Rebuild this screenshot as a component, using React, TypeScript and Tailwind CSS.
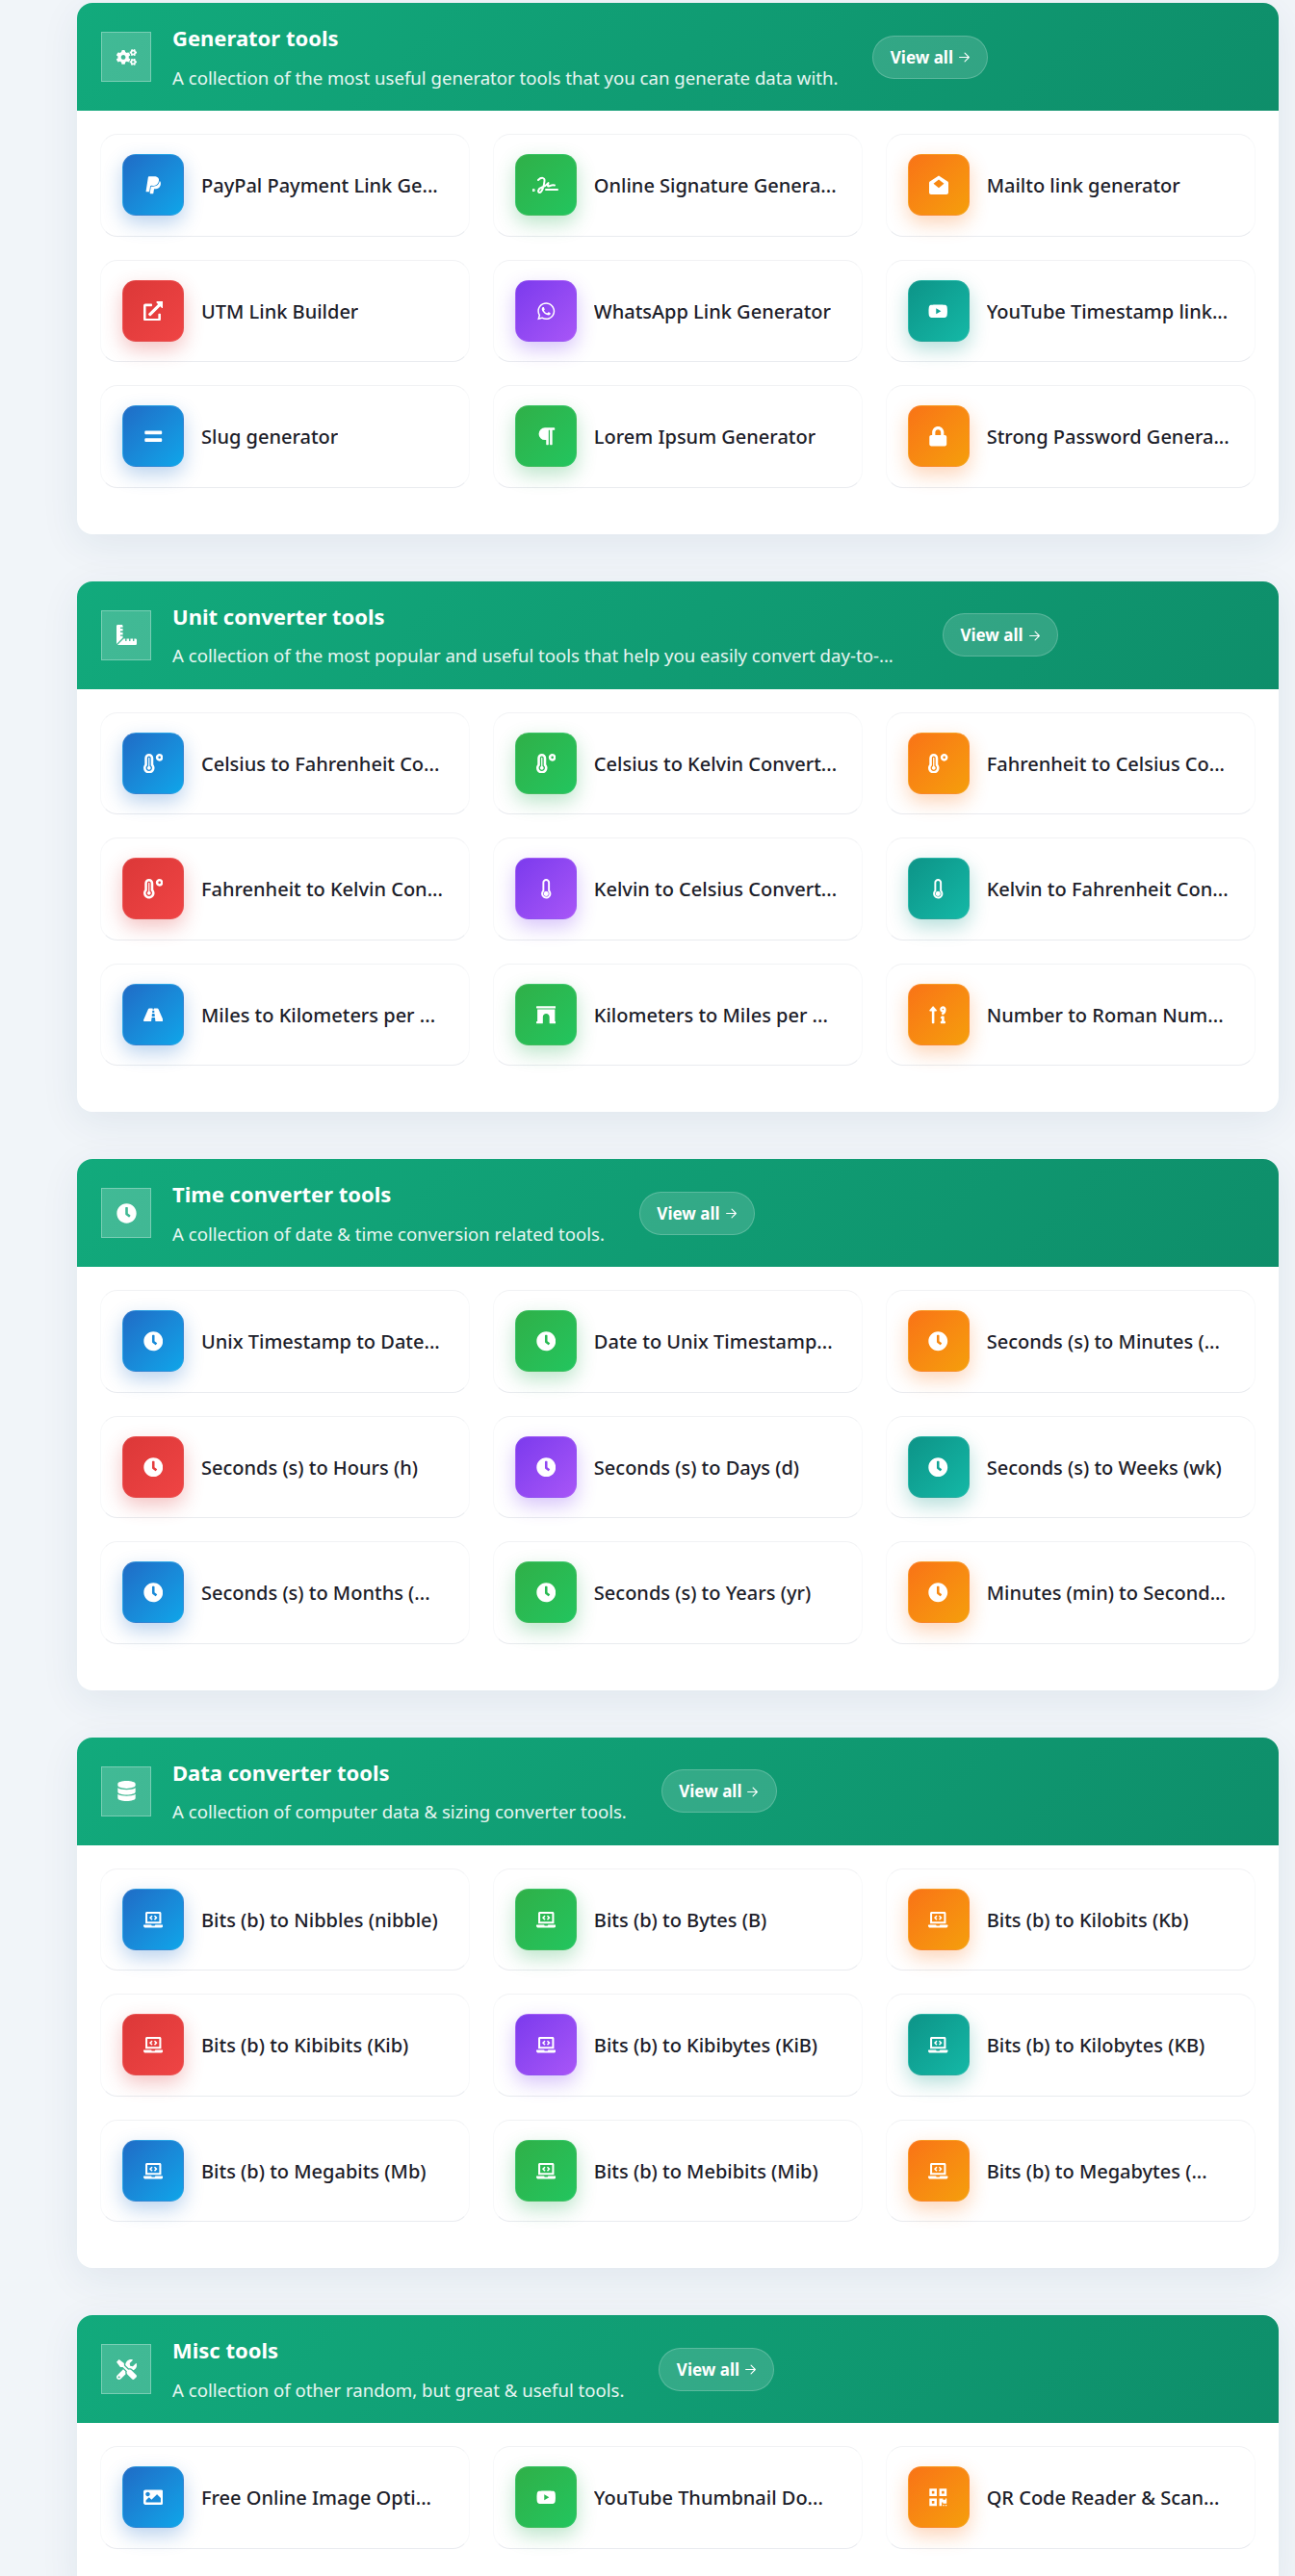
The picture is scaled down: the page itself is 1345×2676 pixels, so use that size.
import React from "react";
import {
  FaCogs, FaRulerCombined, FaClock, FaDatabase, FaTools, FaPaypal,
  FaExternalLinkAlt, FaWhatsapp, FaYoutube, FaEquals, FaParagraph, FaLock, FaTemperatureHigh,
  FaThermometerEmpty, FaRoad, FaArchway, FaSortNumericUpAlt, FaLaptopCode, FaImage, FaQrcode,
} from "react-icons/fa";

function SignatureIcon() {
  return (
    <svg width="27" height="19" viewBox="0 0 27 19" fill="none" stroke="currentColor" strokeWidth="2" strokeLinecap="round" strokeLinejoin="round">
      <path d="M6 4C9 1 13 1 12.5 5C12 10 10 17 7.5 17C5 17 6 13 9 12C12 11 15 9 16.5 7C16 9 15.5 11 17 10.5C19 10 20 8.5 23 9.5" />
      <path d="M14 14H26" />
      <circle cx="1.2" cy="14.5" r="0.6" />
    </svg>
  );
}

function MailOpenIcon() {
  return (
    <svg width="20" height="20" viewBox="0 0 20 20" fill="currentColor">
      <path
        fillRule="evenodd"
        d="M10 0.5L19.2 6.6C19.7 6.9 20 7.4 20 8V18C20 19.1 19.1 20 18 20H2C0.9 20 0 19.1 0 18V8C0 7.4 0.3 6.9 0.8 6.6L10 0.5ZM10 4.5L4.5 8.8L10 13.2L15.5 8.8L10 4.5Z"
      />
    </svg>
  );
}

const colors = [
  "bg-gradient-to-br from-[#1f6cc6] to-[#0ea5e9] shadow-[0_8px_20px_rgba(30,110,200,0.3)]",
  "bg-gradient-to-br from-[#2fb048] to-[#22c55e] shadow-[0_8px_20px_rgba(34,170,80,0.3)]",
  "bg-gradient-to-br from-[#f97316] to-[#f59e0b] shadow-[0_8px_20px_rgba(249,115,22,0.3)]",
  "bg-gradient-to-br from-[#dc3838] to-[#ef4444] shadow-[0_8px_20px_rgba(220,56,56,0.3)]",
  "bg-gradient-to-br from-[#7c3aed] to-[#a855f7] shadow-[0_8px_20px_rgba(124,58,237,0.3)]",
  "bg-gradient-to-br from-[#0d9488] to-[#14b8a6] shadow-[0_8px_20px_rgba(13,148,136,0.3)]",
];
const colorOrder = [0, 1, 2, 3, 4, 5, 0, 1, 2];

type IconType = React.ComponentType<{ className?: string }>;
type Tool = [string, IconType];
type Section = { title: string; desc: string; descClass?: string; Icon: IconType; tools: Tool[] };

const sections: Section[] = [
  {
    title: "Generator tools",
    desc: "A collection of the most useful generator tools that you can generate data with.",
    Icon: FaCogs,
    tools: [
      ["PayPal Payment Link Ge...", FaPaypal],
      ["Online Signature Genera...", SignatureIcon],
      ["Mailto link generator", MailOpenIcon],
      ["UTM Link Builder", FaExternalLinkAlt],
      ["WhatsApp Link Generator", FaWhatsapp],
      ["YouTube Timestamp link...", FaYoutube],
      ["Slug generator", FaEquals],
      ["Lorem Ipsum Generator", FaParagraph],
      ["Strong Password Genera...", FaLock],
    ],
  },
  {
    title: "Unit converter tools",
    desc: "A collection of the most popular and useful tools that help you easily convert day-to-...",
    descClass: "w-[764px]",
    Icon: FaRulerCombined,
    tools: [
      ["Celsius to Fahrenheit Co...", FaTemperatureHigh],
      ["Celsius to Kelvin Convert...", FaTemperatureHigh],
      ["Fahrenheit to Celsius Co...", FaTemperatureHigh],
      ["Fahrenheit to Kelvin Con...", FaTemperatureHigh],
      ["Kelvin to Celsius Convert...", FaThermometerEmpty],
      ["Kelvin to Fahrenheit Con...", FaThermometerEmpty],
      ["Miles to Kilometers per ...", FaRoad],
      ["Kilometers to Miles per ...", FaArchway],
      ["Number to Roman Num...", FaSortNumericUpAlt],
    ],
  },
  {
    title: "Time converter tools",
    desc: "A collection of date & time conversion related tools.",
    Icon: FaClock,
    tools: [
      ["Unix Timestamp to Date...", FaClock],
      ["Date to Unix Timestamp...", FaClock],
      ["Seconds (s) to Minutes (...", FaClock],
      ["Seconds (s) to Hours (h)", FaClock],
      ["Seconds (s) to Days (d)", FaClock],
      ["Seconds (s) to Weeks (wk)", FaClock],
      ["Seconds (s) to Months (...", FaClock],
      ["Seconds (s) to Years (yr)", FaClock],
      ["Minutes (min) to Second...", FaClock],
    ],
  },
  {
    title: "Data converter tools",
    desc: "A collection of computer data & sizing converter tools.",
    Icon: FaDatabase,
    tools: [
      ["Bits (b) to Nibbles (nibble)", FaLaptopCode],
      ["Bits (b) to Bytes (B)", FaLaptopCode],
      ["Bits (b) to Kilobits (Kb)", FaLaptopCode],
      ["Bits (b) to Kibibits (Kib)", FaLaptopCode],
      ["Bits (b) to Kibibytes (KiB)", FaLaptopCode],
      ["Bits (b) to Kilobytes (KB)", FaLaptopCode],
      ["Bits (b) to Megabits (Mb)", FaLaptopCode],
      ["Bits (b) to Mebibits (Mib)", FaLaptopCode],
      ["Bits (b) to Megabytes (...", FaLaptopCode],
    ],
  },
  {
    title: "Misc tools",
    desc: "A collection of other random, but great & useful tools.",
    Icon: FaTools,
    tools: [
      ["Free Online Image Opti...", FaImage],
      ["YouTube Thumbnail Do...", FaYoutube],
      ["QR Code Reader & Scan...", FaQrcode],
    ],
  },
];

function ToolCard({ tool, color }: { tool: Tool; color: string }) {
  const [name, Icon] = tool;
  return (
    <a className="flex h-[106.5px] items-center gap-[18px] rounded-[18px] border border-[#f8f9fa] border-t-[#f1f2f4] border-b-[#e9ebef] bg-white px-[22px]">
      <span className={`flex h-[64px] w-[64px] shrink-0 items-center justify-center rounded-[14px] border border-white/10 text-[20.5px] text-white ${color}`}>
        <Icon />
      </span>
      <span className="truncate pt-[2px] text-[20px] leading-[30px] font-medium text-[#1c2029]">{name}</span>
    </a>
  );
}

function SectionCard({ section }: { section: Section }) {
  const { title, desc, descClass, Icon, tools } = section;
  return (
    <section className="shrink-0 overflow-hidden rounded-2xl bg-white shadow-[0_10px_40px_rgba(30,60,100,0.08)]">
      <header className="flex h-[112px] items-center gap-[22px] bg-[linear-gradient(135deg,#12aa7c,#0e8e6a)] px-[25px]">
        <span className="flex h-[52px] w-[52px] shrink-0 items-center justify-center border border-white/30 bg-white/20 text-[21px] text-white">
          <Icon />
        </span>
        <div className="min-w-0">
          <h2 className="text-[22px] leading-[33px] font-bold text-white">{title}</h2>
          <p className={`mt-[10.5px] text-[18.6px] leading-[28px] whitespace-nowrap text-white/90 ${descClass ?? ""}`}>{desc}</p>
        </div>
        <button className="ml-[14px] flex h-[45px] w-[120px] shrink-0 items-center justify-center gap-[5px] rounded-full border border-white/20 bg-white/15 pt-[1px] text-[17px] font-bold text-white">
          View all
          <svg width="13" height="13" viewBox="0 0 24 24" fill="none" stroke="currentColor" strokeWidth="2" strokeLinecap="round" strokeLinejoin="round">
            <path d="M3 12h18M13 4l8 8-8 8" />
          </svg>
        </button>
      </header>
      <div className="grid grid-cols-3 gap-[24px] px-[24px] pt-[24px] pb-[48px]">
        {tools.map((t, i) => (
          <ToolCard key={t[0]} tool={t} color={colors[colorOrder[i]]} />
        ))}
      </div>
    </section>
  );
}

export default function App() {
  return (
    <div className="flex h-[2676px] flex-col gap-[49px] overflow-hidden bg-[#f1f5f9] pt-[3px] pr-[17.5px] pl-[80px] [font-family:'Noto_Sans',sans-serif]">
      {sections.map((s) => (
        <SectionCard key={s.title} section={s} />
      ))}
    </div>
  );
}
